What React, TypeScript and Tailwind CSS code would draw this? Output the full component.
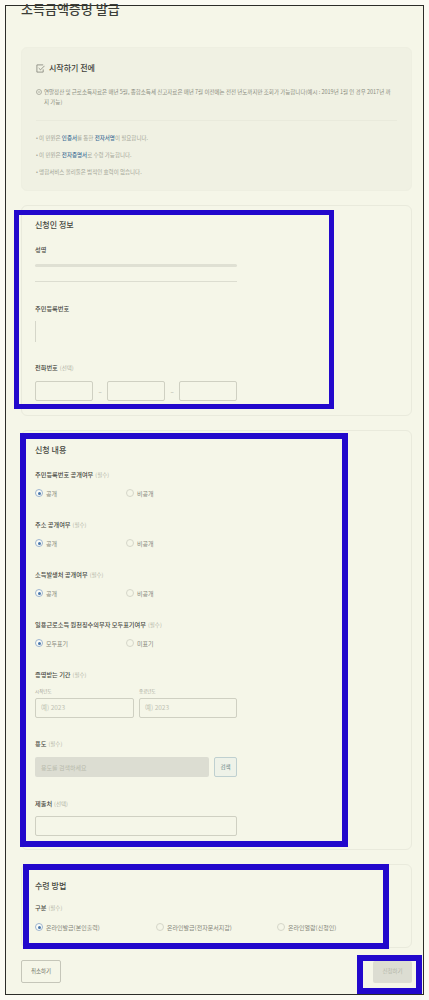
function Label({ text, note }: { text: string; note?: string }) {
    return <div className="h-3 flex items-center gap-[2px] text-[6.2px] leading-3 font-medium text-[#45473f]">
        {text}
        {note && <span className="text-[5.5px] font-normal text-[#b0b2a4]">({note})</span>}
    </div>
}

function Radio({ label, checked, width }: { label: string; checked?: boolean; width: string }) {
    return <div className={`flex items-center gap-[3px] ${width}`}>
        <span className={`w-2 h-2 rounded-full border flex items-center justify-center shrink-0 ${checked ? 'border-[#9db4cf] bg-[#fbfcf6]' : 'border-[#d5d6c9]'}`}>
            {checked && <span className="w-[3px] h-[3px] rounded-full bg-[#4a78ad]" />}
        </span>
        <span className="text-[6px] text-[#85877b]">{label}</span>
    </div>
}

function RadioGroup({ text, first }: { text: string; first: string }) {
    return <div className="flex flex-col gap-[6px] mb-5">
        <Label text={text} note="필수" />
        <div className="h-3 flex items-center">
            <Radio label={first} checked width="w-[91px]" />
            <Radio label={first === '모두표기' ? '미표기' : '비공개'} width="w-[91px]" />
        </div>
    </div>
}

function Input({ placeholder, className }: { placeholder?: string; className: string }) {
    return <div className={`h-5 border border-[#cfd0c2] rounded-[2px] flex items-center px-[5px] text-[6.5px] text-[#c0c2b4] ${className}`}>
        {placeholder}
    </div>
}

function Bullet({ children }: { children: React.ReactNode }) {
    return <p className="h-[17px] leading-[17px] text-[5.5px] text-[#a2a496]">• {children}</p>
}

function Link({ children }: { children: React.ReactNode }) {
    return <span className="font-medium text-[#3f6f96]">{children}</span>
}

function CheckIcon() {
    return <svg viewBox="0 0 10 10" className="w-[9px] h-[9px] shrink-0" fill="none" stroke="#75776c" strokeWidth="0.8">
        <path d="M8 1H1v8h7V6" />
        <path d="M3 4.5l2 2L9.5 2" />
    </svg>
}

function InfoIcon() {
    return <svg viewBox="0 0 10 10" className="w-[6px] h-[6px] mt-[2px] shrink-0" fill="none" stroke="#8a8c80" strokeWidth="1">
        <circle cx="5" cy="5" r="4.2" />
        <path d="M3 5h4" />
    </svg>
}

export default function App() {
    return <div className="relative w-[429px] h-[1000px] overflow-hidden bg-[#fbfbf3] p-[5px] font-['Noto_Sans_CJK_KR','Noto_Sans',sans-serif]">
        <div className="h-[990px] border border-[#2c2d28] bg-[#f5f6e8] pl-[15px] pr-[11px]">
            <h1 className="-mt-[5px] h-4 leading-4 text-[13px] font-medium text-[#3c3e38]">소득금액증명 발급</h1>

            <section className="mt-[30px] h-[144px] border border-[#eeefe1] rounded-md bg-[#f0f1e3] px-[14px] pt-[14px]">
                <div className="flex items-center gap-[4px] h-3 text-[8px] font-medium text-[#3f413a]">
                    <CheckIcon />
                    시작하기 전에
                </div>
                <div className="mt-[13px] flex gap-[2px] text-[5.5px] leading-[10px] text-[#8a8c80]">
                    <InfoIcon />
                    <p className="pr-[3px]">연말정산 및 근로소득자료은 매년 5월, 종합소득세 신고자료은 매년 7월 이전에는 전전 년도까지만 조회가 가능합니다(예시 : 2019년 1월 인 경우 2017년 까지 가능)</p>
                </div>
                <div className="mt-[13px] border-t border-[#e9eadc]" />
                <div className="mt-[9px]">
                    <Bullet>이 민원은 <Link>인증서</Link>를 통한 <Link>전자서명</Link>이 필요합니다.</Bullet>
                    <Bullet>이 민원은 <Link>전자증명서</Link>로 수령 가능합니다.</Bullet>
                    <Bullet>맹합서비스 올리둘은 범적인 효력이 없습니다.</Bullet>
                </div>
            </section>

            <section className="mt-[14px] h-[211px] border border-[#e9eadc] rounded-md px-[13px] pt-[13px]">
                <h2 className="h-3 leading-3 text-[8px] font-medium text-[#45473f]">신청인 정보</h2>
                <div className="mt-[13px]"><Label text="성명" /></div>
                <div className="mt-[8px] w-[202px] h-[3px] bg-[#dfe0d3] rounded-sm" />
                <div className="mt-[14px] w-[202px] border-t border-[#dcddd0]" />
                <div className="mt-[21px]"><Label text="주민등록번호" /></div>
                <div className="mt-[6px] w-px h-[21px] bg-[#d5d6c9]" />
                <div className="mt-[20px]"><Label text="전화번호" note="선택" /></div>
                <div className="mt-[7px] w-[202px] flex items-center justify-between text-[6px] text-[#a2a496]">
                    <Input className="w-[58px]" />
                    <span>–</span>
                    <Input className="w-[58px]" />
                    <span>–</span>
                    <Input className="w-[58px]" />
                </div>
            </section>

            <section className="mt-[14px] h-[420px] border border-[#e9eadc] rounded-md px-[13px] pt-[11px]">
                <h2 className="h-4 leading-4 text-[8px] font-medium text-[#45473f]">신청 내용</h2>
                <div className="mt-[11px] w-[202px]">
                    <RadioGroup text="주민등록번호 공개여부" first="공개" />
                    <RadioGroup text="주소 공개여부" first="공개" />
                    <RadioGroup text="소득발생처 공개여부" first="공개" />
                    <RadioGroup text="일용근로소득 원천징수의무자 모두표기여부" first="모두표기" />
                    <Label text="증명받는 기간" note="필수" />
                    <div className="mt-[6px] flex justify-between text-[4.5px] leading-2 text-[#a2a496]">
                        <span className="w-[99px]">시작년도</span>
                        <span className="w-[98px]">종료년도</span>
                    </div>
                    <div className="mt-[3px] flex justify-between">
                        <Input className="w-[99px]" placeholder="예) 2023" />
                        <Input className="w-[98px]" placeholder="예) 2023" />
                    </div>
                    <div className="mt-5"><Label text="용도" note="필수" /></div>
                    <div className="mt-[7px] flex justify-between">
                        <div className="w-[174px] h-5 rounded-[2px] bg-[#dcddd2] flex items-center px-[6px] text-[6px] text-[#b8baac]">용도를 검색하세요</div>
                        <button className="w-[23px] h-5 rounded-[2px] border border-[#bfd0d0] bg-[#eef2e8] text-[5.5px] text-[#5f7f84]">검색</button>
                    </div>
                    <div className="mt-[21px]"><Label text="제출처" note="선택" /></div>
                    <Input className="mt-[6px] w-[202px]" />
                </div>
            </section>

            <section className="mt-[14px] h-[84px] border border-[#e9eadc] rounded-md px-[13px] pt-[13px]">
                <h2 className="h-4 leading-4 text-[8px] font-medium text-[#45473f]">수령 방법</h2>
                <div className="mt-[8px]"><Label text="구분" note="필수" /></div>
                <div className="mt-[7px] h-3 flex items-center">
                    <Radio label="온라인발급(본인출력)" checked width="w-[121px]" />
                    <Radio label="온라인발급(전자문서지갑)" width="w-[121px]" />
                    <Radio label="온라인열람(신청인)" width="w-[121px]" />
                </div>
            </section>

            <div className="mt-[12px] flex justify-between items-center">
                <button className="w-10 h-[23px] border border-[#c5c6b9] rounded-[2px] text-[5.5px] text-[#6f7166]">취소하기</button>
                <button className="w-[39px] h-[22px] rounded-[2px] bg-[#dcddd2] text-[5.5px] text-[#b3b5a8]">신청하기</button>
            </div>
        </div>

        {/* blue annotation boxes drawn over the page */}
        <div className="absolute left-[14px] top-[210px] w-[320px] h-[199px] border-[5px] border-[#2208cc]" />
        <div className="absolute left-[20px] top-[433px] w-[328px] h-[414px] border-[6px] border-[#2208cc]" />
        <div className="absolute left-[23px] top-[864px] w-[366px] h-[85px] border-[6px] border-[#2208cc]" />
        <div className="absolute left-[357px] top-[955px] w-[65px] h-[39px] border-[6px] border-[#2208cc]" />
    </div>
}
